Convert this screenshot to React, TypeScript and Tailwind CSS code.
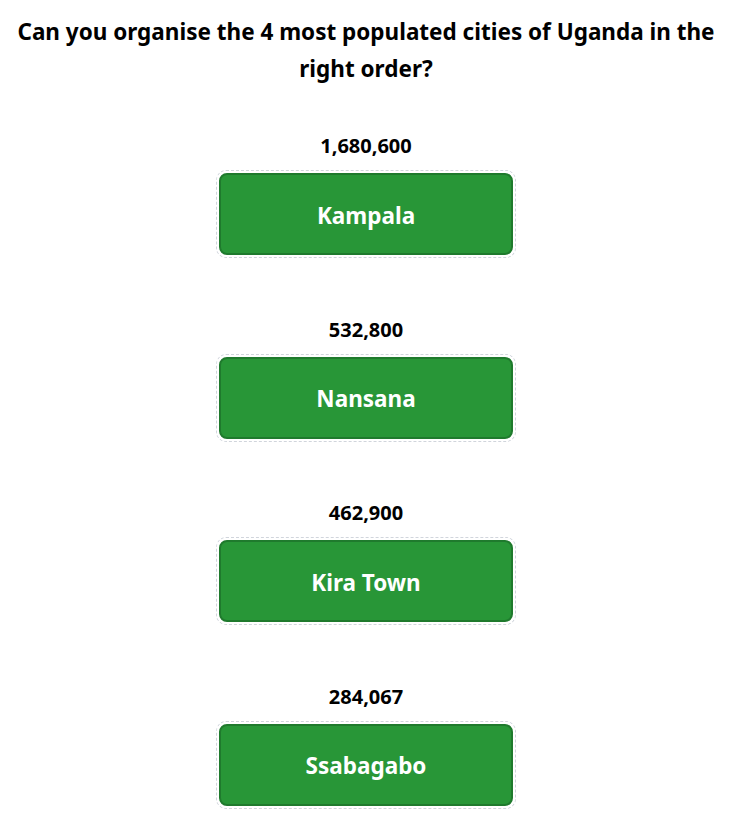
import React from 'react';

const cities = [
  { name: 'Kampala', population: '1,680,600' },
  { name: 'Nansana', population: '532,800' },
  { name: 'Kira Town', population: '462,900' },
  { name: 'Ssabagabo', population: '284,067' },
];

const App: React.FC = () => {
  return (
    <div className="min-h-screen bg-white text-black font-['Noto_Sans',sans-serif]">
      <h1 className="px-[12px] pt-[13px] text-center text-[22.5px] font-bold leading-[37px]">
        Can you organise the 4 most populated cities of Uganda in the right order?
      </h1>
      <div className="mt-[47px] flex flex-col items-center gap-[59.5px]">
        {cities.map((city) => (
          <div key={city.name} className="flex flex-col items-center">
            <div className="h-6 text-[20px] font-bold leading-6">{city.population}</div>
            <div className="mt-[12px] rounded-[10px] border border-dashed border-gray-300 p-[2px]">
              <button className="flex h-[82px] w-[294px] items-center justify-center rounded-lg border-2 border-[#1f7a2d] bg-[#289637] pt-[3px] text-[22.5px] font-bold text-white">
                {city.name}
              </button>
            </div>
          </div>
        ))}
      </div>
    </div>
  );
};

export default App;
